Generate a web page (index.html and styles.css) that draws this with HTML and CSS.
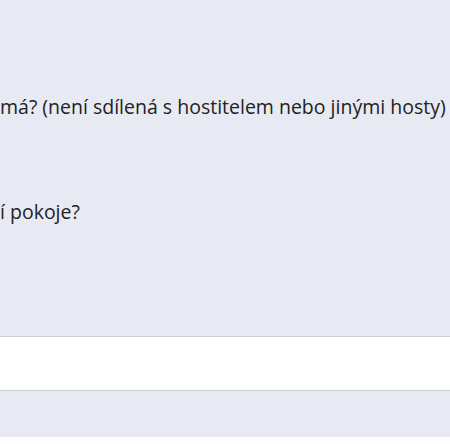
FILE: index.html
```html
<!DOCTYPE html>
<html lang="cs">
  <head>
    <meta charset="UTF-8" />
    <meta name="viewport" content="width=device-width, initial-scale=1.0" />
    <title>Dotazník ubytování</title>
    <link rel="stylesheet" href="styles.css">
  </head>
  <body>
    <div class="form">
      <section class="question first">
        <p class="label">má? (není sdílená s hostitelem nebo jinými hosty)</p>
      </section>
      <section class="question second">
        <p class="label">í pokoje?</p>
      </section>
      <div class="answer">
        <input type="text" class="field" placeholder="" />
      </div>
    </div>
    <footer></footer>
  </body>
</html>
```

FILE: styles.css
```css
body {
  margin: 0;
  background-color: #e8eaf3;
  font-family: "Open Sans", "Noto Sans", sans-serif;
  color: #222;
}
.form {
  height: 437px;
  overflow: hidden;
}
.label {
  margin: 0;
  font-size: 19.5px;
  line-height: 24px;
  white-space: nowrap;
}
.first {
  padding-top: 95px;
}
.second {
  padding-top: 81px;
}
.answer {
  margin-top: 112px;
  background-color: #fff;
  border-top: 1px solid #cfd0d6;
  border-bottom: 1px solid #cfd0d6;
  height: 53px;
}
.field {
  border: none;
  width: 100%;
  height: 100%;
  background: transparent;
  outline: none;
}
footer {
  height: 7px;
  background-color: #fdfefb;
}
```
